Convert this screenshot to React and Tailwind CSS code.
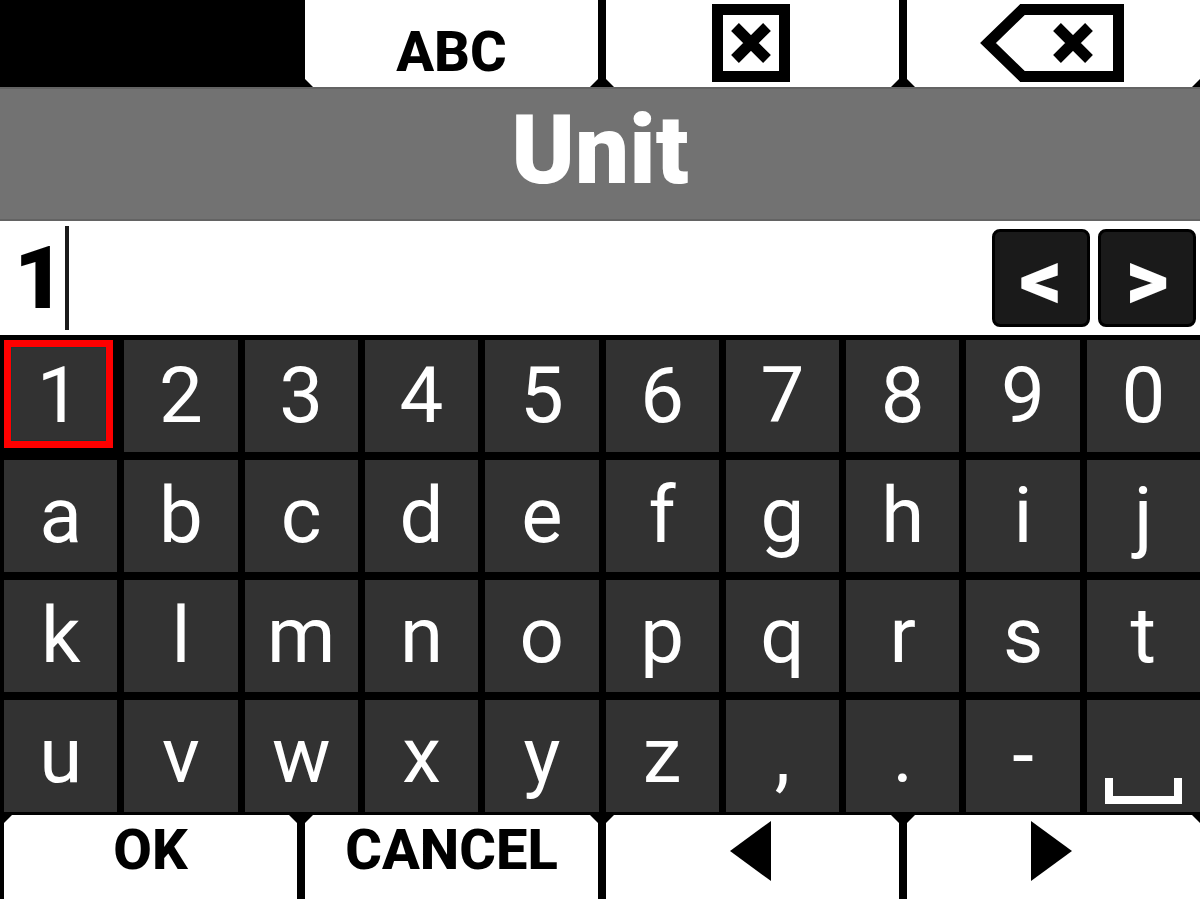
import { useState } from "react";

const KEYS = "1234567890abcdefghijklmnopqrstuvwxyz,.- ".split("");

const TOP_KEY =
  "flex min-w-0 items-center justify-center bg-white [clip-path:polygon(0_0,100%_0,100%_calc(100%-8px),calc(100%-8px)_100%,8px_100%,0_calc(100%-8px))]";
const BOTTOM_KEY =
  "flex min-w-0 items-start justify-center bg-white [clip-path:polygon(8px_0,calc(100%-8px)_0,100%_8px,100%_100%,0_100%,0_8px)]";
const ARROW_KEY =
  "size-[98px] rounded-lg border-3 border-black bg-[#1a1a1a] pt-1 text-center text-[84px] leading-[80px] font-black text-white";

function Cross({ x }) {
  return <path d={`M${x - 16} 23l32 32M${x + 16} 23l-32 32`} stroke="currentColor" strokeWidth="11" />;
}

function Triangle({ points }) {
  return (
    <svg width="41" height="60" viewBox="0 0 41 60" fill="currentColor" aria-hidden="true">
      <polygon points={points} />
    </svg>
  );
}

export default function App() {
  const [value, setValue] = useState("1");
  const [selected, setSelected] = useState("1");

  const press = (key) => {
    setSelected(key);
    setValue(value + key);
  };

  return (
    <main className="flex min-h-screen flex-col bg-black font-[Roboto,sans-serif] text-black">
      <div className="grid h-[87px] grid-cols-4 gap-2 pl-1">
        <div />
        <button className={`${TOP_KEY} pt-4 text-[56px] leading-[70px] font-extrabold`}>ABC</button>
        <button className={`${TOP_KEY} pr-1`} aria-label="Clear" onClick={() => setValue("")}>
          <svg width="80" height="80" viewBox="0 0 80 80" fill="none" aria-hidden="true">
            <rect x="6.5" y="5.5" width="67" height="67" stroke="currentColor" strokeWidth="11" />
            <Cross x={40} />
          </svg>
        </button>
        <button className={`${TOP_KEY} pr-1`} aria-label="Backspace" onClick={() => setValue(value.slice(0, -1))}>
          <svg width="146" height="80" viewBox="0 0 146 80" fill="none" aria-hidden="true">
            <path d="M9 39L43.5 5.5H139.5V72.5H43.5Z" stroke="currentColor" strokeWidth="11" />
            <Cross x={94} />
          </svg>
        </button>
      </div>

      <h1 className="border-y-2 border-[#636363] bg-[#727272] pb-2 text-center text-[96px] leading-[122px] font-black text-white">
        <label htmlFor="unit">Unit</label>
      </h1>

      <div className="flex items-center gap-2 bg-white pr-1 pl-3.5">
        <div className="flex min-w-0 flex-1 items-center">
          <input
            id="unit"
            className="field-sizing-content max-w-full min-w-0 text-[88px] leading-[114px] font-black caret-transparent outline-none"
            value={value}
            onChange={(e) => setValue(e.target.value)}
          />
          <span className="h-[104px] w-1 shrink-0 bg-[#1a1a1a]" />
        </div>
        <button className={ARROW_KEY} aria-label="Move left">&lt;</button>
        <button className={ARROW_KEY} aria-label="Move right">&gt;</button>
      </div>

      <div className="grid auto-rows-[112px] grid-cols-10 gap-x-[7px] gap-y-2 pt-[5px] pb-[3px] pl-1 text-[78px] leading-[112px] text-white">
        {KEYS.map((key) =>
          key === " " ? (
            <button
              key="space"
              className="flex items-end justify-center bg-[#323232] pb-2"
              aria-label="Space"
              onClick={() => press(" ")}
            >
              <span className="h-[26px] w-[77px] border-8 border-t-0 border-white" />
            </button>
          ) : (
            <button
              key={key}
              className={
                key === selected
                  ? "mr-1 mb-1 flex items-center justify-center border-[7px] border-[#fe0000] bg-[#323232] pt-1 inset-shadow-[0_0_0_1px_#1c3838]"
                  : "flex items-center justify-center bg-[#323232]"
              }
              onClick={() => press(key)}
            >
              {key}
            </button>
          )
        )}
      </div>

      <div className="grid min-h-[84px] flex-1 grid-cols-4 gap-2 pl-1 text-[56px] leading-[70px] font-extrabold">
        <button className={BOTTOM_KEY}>OK</button>
        <button className={BOTTOM_KEY}>CANCEL</button>
        <button className={`${BOTTOM_KEY} pt-1.5 pr-1`} aria-label="Previous">
          <Triangle points="41,0 0,30 41,60" />
        </button>
        <button className={`${BOTTOM_KEY} pt-1.5 pr-1`} aria-label="Next">
          <Triangle points="0,0 41,30 0,60" />
        </button>
      </div>
    </main>
  );
}
